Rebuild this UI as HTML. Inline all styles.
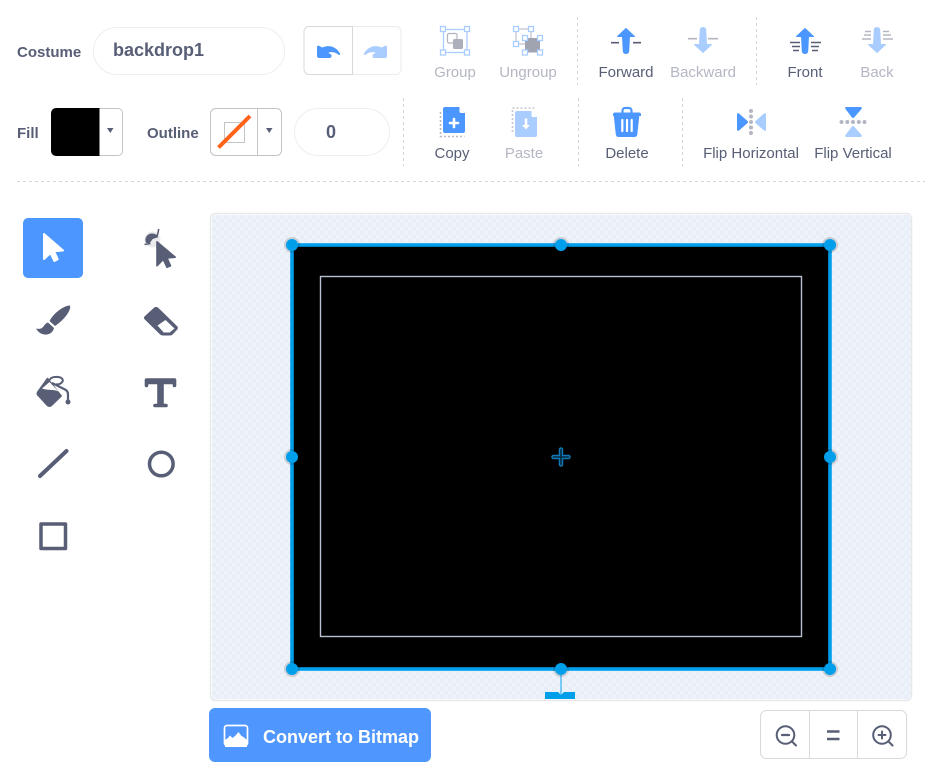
<!DOCTYPE html>
<html><head><meta charset="utf-8"><style>
html,body{margin:0;padding:0;width:941px;height:779px;background:#fff;overflow:hidden}
body{position:relative;font-family:"Liberation Sans",Arial,sans-serif;color:#575e75}
svg{position:absolute;left:0;top:0}
.t{position:absolute;white-space:nowrap;font-size:15px;line-height:18px;transform:translateX(-50%)}
.d{color:#b4b7c3}
.l{position:absolute;white-space:nowrap;font-size:15px;line-height:18px;font-weight:bold}
</style></head><body>
<svg width="941" height="779" viewBox="0 0 941 779" xmlns="http://www.w3.org/2000/svg">
<defs>
<pattern id="ck" width="8" height="8" patternUnits="userSpaceOnUse" x="212" y="215"><rect width="8" height="8" fill="#e8eef7"/><rect width="4" height="4" fill="#eef2f9"/><rect x="4" y="4" width="4" height="4" fill="#eef2f9"/></pattern>
<clipPath id="cv"><rect x="212" y="215" width="699" height="484"/></clipPath>
<g id="h"><circle r="8" fill="#000" fill-opacity=".14"/><circle r="6" fill="#009fec"/></g>
</defs>

<!-- name input -->
<rect x="93.500" y="27.500" width="191" height="47" rx="23.500" fill="#fff" stroke="#ebeef2"/>
<!-- undo/redo -->
<path d="M352.500 26.500H309a5 5 0 0 0-5 5v38a5 5 0 0 0 5 5h43.500" fill="none" stroke="#d9d9d9"/>
<path d="M352.500 26.500H396a5 5 0 0 1 5 5v38a5 5 0 0 1-5 5h-43.500" fill="none" stroke="#ebebeb"/>
<path d="M352.500 26.500v48" stroke="#d9d9d9"/>
<path d="M317 47c0-1.200 1-1.800 2-1.200l3.200 1.700c5.500-2.700 13.500-2 17.800 6 .5 1.100-.6 1.900-1.500 1.200-3-2.400-7-3.300-10.200-2l2.500 1.700c1.400 1 .8 3.600-1 3.600H319c-1.200 0-2-.8-2-2z" fill="#4c97ff"/>
<path d="M387 47c0-1.200-1-1.800-2-1.200l-3.200 1.700c-5.500-2.700-13.500-2-17.800 6-.5 1.100.6 1.900 1.500 1.200 3-2.400 7-3.300 10.200-2l-2.500 1.700c-1.400 1-.8 3.600 1 3.600H385c1.200 0 2-.8 2-2z" fill="#a9cdff"/>

<!-- group -->
<g fill="#fff" stroke="#a9cdff" stroke-width="1.300">
<rect x="443.500" y="29.500" width="23.500" height="23" fill="none"/>
<rect x="440.500" y="26.500" width="5" height="5"/><rect x="464.500" y="26.500" width="5" height="5"/><rect x="440.500" y="50" width="5" height="5"/><rect x="464.500" y="50" width="5" height="5"/></g>
<rect x="447.500" y="33.500" width="9.500" height="9.500" rx="1.500" fill="#fff" stroke="#b1b4c0" stroke-width="1.200"/>
<rect x="453" y="39" width="10" height="10" rx="1.500" fill="#adb0bc"/>
<!-- ungroup -->
<path d="M516 29h15v15h-15z" fill="none" stroke="#b1b4c0" stroke-width="1"/>
<rect x="525" y="38" width="15" height="14.500" fill="#a0a3b0"/>
<g fill="#fff" stroke="#a9cdff" stroke-width="1.300">
<rect x="513.500" y="26.500" width="5" height="5"/><rect x="528.500" y="26.500" width="5" height="5"/><rect x="513.500" y="41.500" width="5" height="5"/>
<rect x="522.500" y="35.500" width="5" height="5"/><rect x="537.500" y="35.500" width="5" height="5"/><rect x="522.500" y="50" width="5" height="5"/><rect x="537.500" y="50" width="5" height="5"/></g>

<!-- forward -->
<path d="M611 42.700h8M633 42.700h8" stroke="#575e75" stroke-width="1.700"/>
<path d="M626 28.500l8.500 8h-5l-.8 14.800a2.700 2.200 0 0 1-5.400 0l-.8-14.800h-5z" fill="#4c97ff" stroke="#4c97ff" stroke-linejoin="round"/>
<!-- backward -->
<path d="M688 38.700h9M708 38.700h10" stroke="#b4b7c3" stroke-width="1.700"/>
<path d="M703 52.500l-8.500-8h5l.8-14.800a2.700 2.200 0 0 1 5.400 0l.8 14.800h5z" fill="#a9cdff" stroke="#a9cdff" stroke-linejoin="round"/>
<!-- front -->
<path d="M790 42.500h10M811 42.500h10M792 46.500h8M811 46.500h8M793 50.500h6M812 50.500h6" stroke="#575e75" stroke-width="1.500"/>
<path d="M805 28.500l8.500 8h-5l-.8 14.800a2.700 2.200 0 0 1-5.400 0l-.8-14.800h-5z" fill="#4c97ff" stroke="#4c97ff" stroke-linejoin="round"/>
<!-- back -->
<path d="M862 39h9M883 39h10M864 35h7M883 35h8M865 31.500h6M883 31.500h6" stroke="#b4b7c3" stroke-width="1.500"/>
<path d="M877 52.500l-8.500-8h5l.8-14.800a2.700 2.200 0 0 1 5.400 0l.8 14.800h5z" fill="#a9cdff" stroke="#a9cdff" stroke-linejoin="round"/>

<!-- dividers -->
<g stroke="#d5d5d5" stroke-dasharray="3 3" fill="none">
<path d="M577.500 17v68M756.500 17v68M403.500 98v68M578.500 98v68M682.500 98v68M17 181.500h908"/>
</g>

<!-- fill -->
<path d="M99.500 108.500H118a4.500 4.500 0 0 1 4.500 4.500v38a4.500 4.500 0 0 1-4.500 4.500H99.500" fill="#fff" stroke="#c4c4c4"/>
<path d="M56 108h43.500v48H56a5 5 0 0 1-5-5v-38a5 5 0 0 1 5-5z" fill="#000"/>
<path d="M107 128h6.500l-3.250 5z" fill="#575e75"/>
<!-- outline -->
<rect x="210.500" y="108.500" width="71" height="47" rx="5" fill="#fff" stroke="#c4c4c4"/>
<path d="M257.500 108.500v47" stroke="#c4c4c4"/>
<rect x="224.500" y="122.500" width="20" height="20" fill="#fff" stroke="#c4c4c4"/>
<path d="M218.500 147.500L250 116" stroke="#ff6319" stroke-width="4"/>
<path d="M266 128h6.500l-3.250 5z" fill="#575e75"/>
<rect x="294.500" y="108.500" width="95" height="47" rx="23.500" fill="#fff" stroke="#ebeef2"/>

<!-- copy -->
<path d="M440.500 112v24.500h24" fill="none" stroke="#b8bac5" stroke-width="1.600" stroke-dasharray="2 2"/>
<path d="M445 107h14l6 6v18a2 2 0 0 1-2 2h-18a2 2 0 0 1-2-2v-22a2 2 0 0 1 2-2z" fill="#4c97ff"/>
<path d="M459.500 107.500v4a1.500 1.500 0 0 0 1.500 1.500h4z" fill="#fff"/>
<path d="M454 119v8M450 123h8" stroke="#fff" stroke-width="2.600" stroke-linecap="round"/>
<!-- paste -->
<path d="M512.500 132v-24h22" fill="none" stroke="#c6c8d1" stroke-width="1.600" stroke-dasharray="2 2"/>
<path d="M517 111h14l6 6v18a2 2 0 0 1-2 2h-18a2 2 0 0 1-2-2v-22a2 2 0 0 1 2-2z" fill="#a9cdff"/>
<path d="M531.500 111.500v4a1.500 1.500 0 0 0 1.500 1.500h4z" fill="#fff"/>
<path d="M526 119.500v6" stroke="#fff" stroke-width="2.600" stroke-linecap="round"/><path d="M522 125h8l-4 4.500z" fill="#fff"/>
<!-- delete -->
<path d="M622.500 113v-2.500a2.500 2.500 0 0 1 2.500-2.500h4a2.500 2.500 0 0 1 2.500 2.500v2.500" fill="none" stroke="#4c97ff" stroke-width="2.200"/>
<path d="M615 112.500h24a2 2 0 0 1 2 2v1.500h-1.700l-2 18.500a3 3 0 0 1-3 2.500h-15.500a3 3 0 0 1-3-2.500l-2-18.500H613v-1.500a2 2 0 0 1 2-2z" fill="#4c97ff"/>
<path d="M622.300 120v11M627 120v11M631.700 120v11" stroke="#fff" stroke-width="2.200" stroke-linecap="round"/>
<!-- flip h -->
<path d="M737 114.500c0-1.200 1-1.700 2-1l8.500 7.500c.7.700.7 1.500 0 2.100l-8.500 7.400c-1 .7-2 .2-2-1z" fill="#4c97ff"/>
<path d="M766 114.500c0-1.200-1-1.700-2-1l-8.500 7.500c-.7.700-.7 1.500 0 2.100l8.500 7.400c1 .7 2 .2 2-1z" fill="#a9cdff"/>
<g fill="#b4b7c3"><circle cx="751" cy="111" r="2"/><circle cx="751" cy="116.500" r="2"/><circle cx="751" cy="122" r="2"/><circle cx="751" cy="127.500" r="2"/><circle cx="751" cy="133" r="2"/></g>
<!-- flip v -->
<path d="M846.500 107c-1.200 0-1.700 1-1 2l6.500 8.500c.7.700 1.500.7 2.100 0l7.400-8.500c.7-1 .2-2-1-2z" fill="#4c97ff"/>
<path d="M846.500 137c-1.200 0-1.700-1-1-2l6.500-8.500c.7-.7 1.500-.7 2.100 0l7.400 8.500c.7 1 .2 2-1 2z" fill="#a9cdff"/>
<g fill="#b4b7c3"><circle cx="841.500" cy="122" r="2"/><circle cx="847.300" cy="122" r="2"/><circle cx="853" cy="122" r="2"/><circle cx="858.800" cy="122" r="2"/><circle cx="864.500" cy="122" r="2"/></g>

<!-- tools -->
<rect x="23" y="218" width="60" height="60" rx="5" fill="#4c97ff"/>
<path d="M44 234v25l6.500-6 3.800 8 3.400-1.800-3.700-8 9-.7z" fill="#fff" stroke="#fff" stroke-width="2" stroke-linejoin="round"/>
<!-- reshape -->
<circle cx="152.500" cy="239.500" r="8" fill="#575e75" fill-opacity=".12"/>
<path d="M146.500 242.500a6 6 0 0 1 6-8.500c2.500 0 4 1 5 3l-5 1.500-3 4z" fill="#575e75" stroke="#575e75" stroke-width="1"/>
<path d="M144.500 244.500l6-1M158.800 229l-1.600 7" stroke="#575e75" stroke-width="1.600"/>
<path d="M157 241.800v24l6.300-6.500 3.700 8 3.500-1.500-3.500-7.800 8.200-.8z" fill="#575e75" stroke="#575e75" stroke-width="1.600" stroke-linejoin="round"/>
<!-- brush -->
<path d="M70 305.500c1.500 4-5 14-15 20.500l-5.500-5c5-9 15-15.500 20.500-15.500zM48 322.500l6 5.500c-1 4.500-5 7-9.500 6.500-3.500-.4-6.500-2.500-8.500-6 3 .8 5 .5 6.800-1.200 1.400-1.400 2-3.800 5.200-4.800z" fill="#575e75"/>
<!-- eraser -->
<path d="M154 307.800l-9.300 8.400c-1 .9-1 2.300 0 3.200l15.300 15c.9.800 2 1.100 3 1.100h7c1 0 1.900-.4 2.700-1.100l4.500-4.800c.9-1 .9-2.400 0-3.300l-19-18.500c-1.100-1-3-1-4.200 0z" fill="#575e75"/>
<path d="M157.500 325.500l8-5.500 9 8.500-4.800 4h-6z" fill="#fff"/>
<!-- bucket -->
<path d="M47.500 378.500L37.800 392c-.8 1.200-.6 2.500.4 3.400l9 9.800c1.300 1.300 3 1.300 4.200.2l9.800-9.400z" fill="#575e75" stroke="#575e75" stroke-width="1.500" stroke-linejoin="round"/>
<path d="M42 388.500l7.500-6.500 9 9.500c-5-2.500-11-.8-16.500-3z" fill="#fff"/>
<path d="M49.500 380c1.500-3 6-3.500 9-3 3.500.6 5 2.500 4 4.500-1 2-4 3.500-6.500 2.500" fill="none" stroke="#575e75" stroke-width="2"/>
<path d="M52 383l13 6.500c2 1 3 3 3 5v6" fill="none" stroke="#575e75" stroke-width="2.200"/>
<circle cx="68" cy="402" r="2.500" fill="#575e75"/>
<!-- T -->
<path d="M147.500 378.500h27a1.500 1.500 0 0 1 1.500 1.500v5.500a1.500 1.500 0 0 1-3 0V384h-9.500v20h2.500a1.500 1.500 0 0 1 0 3h-11a1.500 1.500 0 0 1 0-3h2.500v-20H148v1.500a1.500 1.500 0 0 1-3 0V380a1.500 1.500 0 0 1 1.500-1.500z" fill="#575e75" stroke="#575e75" stroke-width=".6"/>
<path d="M40 476L66.500 451" stroke="#575e75" stroke-width="4" stroke-linecap="round"/>
<circle cx="161.300" cy="464" r="11.800" fill="none" stroke="#575e75" stroke-width="3.500"/>
<rect x="41" y="524" width="24.500" height="24.500" fill="none" stroke="#575e75" stroke-width="3.500" stroke-linejoin="round"/>

<!-- canvas -->
<rect x="210.500" y="213.500" width="701" height="487" rx="5" fill="#fff" stroke="#e8e8e8" stroke-width="1.500"/>
<g clip-path="url(#cv)">
<rect x="212" y="215" width="699" height="484" fill="url(#ck)"/>
<rect x="292" y="245" width="538" height="424" rx="2" fill="#000"/>
<rect x="320.500" y="276.500" width="481" height="360" fill="none" stroke="#b9bfd2" stroke-width="1.400"/>
<path d="M561 669v26" stroke="#5cc0f2" stroke-width="1.600"/>
<path d="M545 692h13l3 3 3-3h11v10h-30z" fill="#009fec"/>
<rect x="292" y="245" width="538" height="424" fill="none" stroke="#009fec" stroke-width="3.600"/>
<use href="#h" x="292" y="245"/><use href="#h" x="561" y="245"/><use href="#h" x="830" y="245"/>
<use href="#h" x="292" y="457"/><use href="#h" x="830" y="457"/>
<use href="#h" x="292" y="669"/><use href="#h" x="561" y="669"/><use href="#h" x="830" y="669"/>
<path d="M561 449.500v15M553.500 457h15" stroke="#0f78b4" stroke-width="4.500" stroke-linecap="round"/>
<path d="M561 449.500v15M553.500 457h15" stroke="#04293f" stroke-width="1.600" stroke-linecap="round"/>
</g>

<!-- convert -->
<rect x="209" y="708" width="222" height="54" rx="6" fill="#4f97ff"/>
<path d="M227 725.500h18a2.500 2.500 0 0 1 2.500 2.500v15a2.500 2.500 0 0 1-2.500 2.500h-18a2.500 2.500 0 0 1-2.500-2.500v-15a2.500 2.500 0 0 1 2.500-2.500z" fill="none" stroke="#fff" stroke-width="1.700"/>
<path d="M225 740l3-2 2-2.500 2.500 2.500 3-2.500 3-3.500 3 4 2 1 3.500 3v7h-22z" fill="#fff"/>

<!-- zoom group -->
<rect x="760.500" y="710.500" width="146" height="48" rx="6" fill="#fff" stroke="#d9d9d9"/>
<path d="M809.500 710.500v48M857.500 710.500v48" stroke="#d9d9d9"/>
<g fill="none" stroke="#575e75">
<circle cx="785.500" cy="735" r="8.800" stroke-width="2"/><path d="M792 741.500l4 4" stroke-width="2" stroke-linecap="round"/><path d="M782 735h7" stroke-width="2.200" stroke-linecap="round"/>
<path d="M827 731.500h12.500M827 739h12.500" stroke-width="2.600"/>
<circle cx="882" cy="735" r="8.800" stroke-width="2"/><path d="M888.500 741.500l4 4" stroke-width="2" stroke-linecap="round"/><path d="M878.500 735h7M882 731.500v7" stroke-width="2" stroke-linecap="round"/>
</g>
</svg>

<div class="l" style="left:17px;top:44px">Costume</div>
<div class="l" style="left:113px;top:40px;font-size:18px;line-height:20px">backdrop1</div>
<div class="l" style="left:17px;top:125px">Fill</div>
<div class="l" style="left:147px;top:125px">Outline</div>
<div class="l" style="left:326px;top:122px;font-size:18px;line-height:20px">0</div>
<div class="t d" style="left:455px;top:64px">Group</div>
<div class="t d" style="left:528px;top:64px">Ungroup</div>
<div class="t" style="left:626px;top:64px">Forward</div>
<div class="t d" style="left:703px;top:64px">Backward</div>
<div class="t" style="left:805px;top:64px">Front</div>
<div class="t d" style="left:877px;top:64px">Back</div>
<div class="t" style="left:452px;top:145px">Copy</div>
<div class="t d" style="left:524px;top:145px">Paste</div>
<div class="t" style="left:627px;top:145px">Delete</div>
<div class="t" style="left:751px;top:145px">Flip Horizontal</div>
<div class="t" style="left:853px;top:145px">Flip Vertical</div>
<div class="l" style="left:263px;top:727px;font-size:18px;line-height:21px;color:#fff">Convert to Bitmap</div>
</body></html>
